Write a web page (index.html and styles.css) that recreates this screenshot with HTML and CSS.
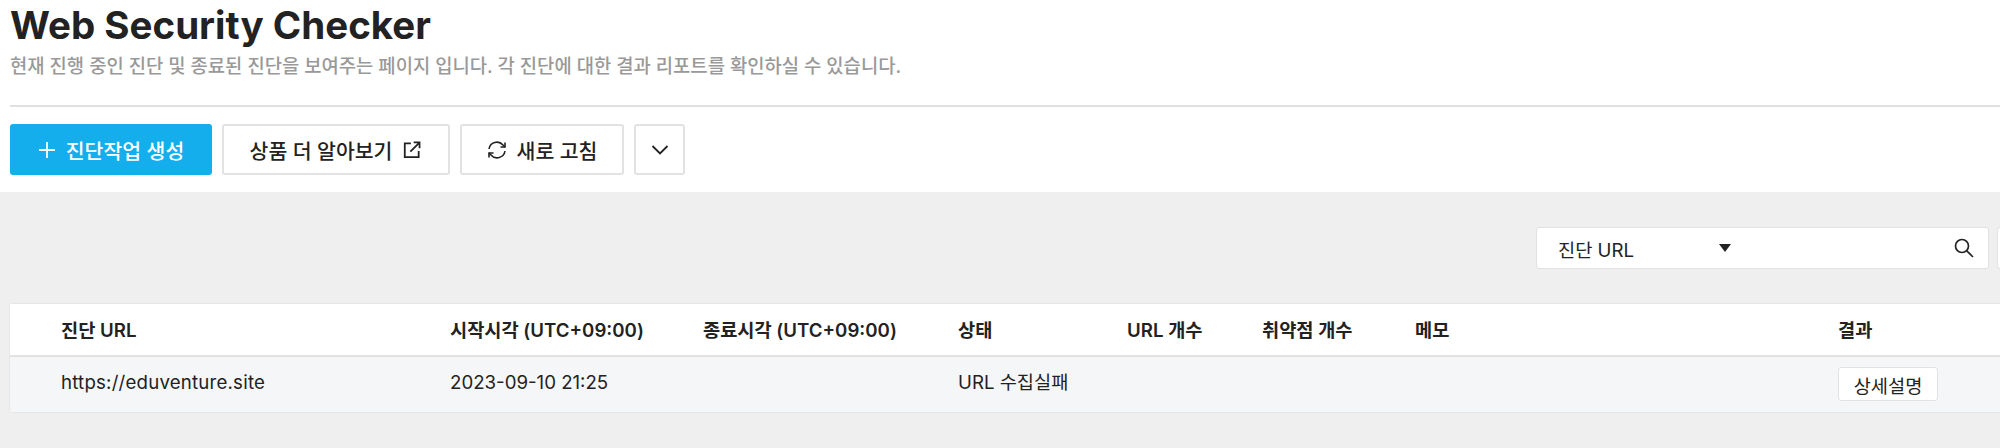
FILE: index.html

```html
<!DOCTYPE HTML>
<html>
<head>
	<title>Web Security Checker</title>
	<link rel="stylesheet" href="styles.css">
</head>
<body>

<div class="ust">
	<h1>Web Security Checker</h1>
	<p class="aciklama">현재 진행 중인 진단 및 종료된 진단을 보여주는 페이지 입니다. 각 진단에 대한 결과 리포트를 확인하실 수 있습니다.</p>
	<div class="cizgi"></div>
	<div class="butonlar">
		<button class="buton mavi">
			<svg width="18" height="18" viewBox="0 0 18 18"><path d="M9 1v16M1 9h16" stroke="#fff" stroke-width="1.8" fill="none"/></svg>
			진단작업 생성
		</button>
		<button class="buton urun">
			상품 더 알아보기
			<svg width="20" height="20" viewBox="0 0 18 18" fill="none" stroke="#222" stroke-width="1.6"><path d="M8 3H2.500v12.500H15V10"/><path d="M7.500 10.500 15.500 2.500M10.500 2.200h5.300v5.300"/></svg>
		</button>
		<button class="buton yenile">
			<svg width="20" height="20" viewBox="0 0 20 20" fill="none" stroke="#222" stroke-width="1.6"><path d="M2 9a8 8 0 0 1 14-4l2 2"/><path d="M18 2.500V7h-4.500"/><path d="M18 11a8 8 0 0 1-14 4l-2-2"/><path d="M2 17.500V13h4.500"/></svg>
			새로 고침
		</button>
		<button class="buton ok">
			<svg width="18" height="10" viewBox="0 0 18 10" fill="none" stroke="#222" stroke-width="1.8"><path d="M1.500 1 9 8.500 16.500 1"/></svg>
		</button>
	</div>
</div>

<div class="alt">
	<div class="arama-satir">
		<div class="arama">
			<div class="secim">
				<span>진단 URL</span>
				<svg width="12" height="8" viewBox="0 0 12 8"><path d="M0 0h12L6 8z" fill="#222"/></svg>
			</div>
			<div class="girdi">
				<svg width="20" height="20" viewBox="0 0 20 20" fill="none" stroke="#222" stroke-width="1.7"><circle cx="8" cy="8" r="6.500"/><path d="M12.800 12.800 19 19"/></svg>
			</div>
		</div>
		<div class="sonraki"></div>
	</div>

	<div class="tablo">
		<div class="satir baslik">
			<div>진단 URL</div>
			<div>시작시각 (UTC+09:00)</div>
			<div>종료시각 (UTC+09:00)</div>
			<div>상태</div>
			<div>URL 개수</div>
			<div>취약점 개수</div>
			<div>메모</div>
			<div>결과</div>
		</div>
		<div class="satir veri">
			<div class="adres">https://eduventure.site</div>
			<div>2023-09-10 21:25</div>
			<div></div>
			<div>URL 수집실패</div>
			<div></div>
			<div></div>
			<div></div>
			<div><button class="detay">상세설명</button></div>
		</div>
	</div>
</div>

</body>
</html>
```

FILE: styles.css

```css
html, body {
	margin: 0;
	height: 100%;
	overflow: hidden;
}

body {
	font-family: "Inter", "Noto Sans CJK KR", sans-serif;
	color: #222;
	background-color: #fff;
	width: 2000px;
	height: 448px;
	display: flex;
	flex-direction: column;
}

.ust {
	height: 192px;
	padding: 0 0 0 10px;
	box-sizing: border-box;
}

h1 {
	margin: 0;
	padding-top: 3px;
	font-size: 38.5px;
	line-height: 45px;
	font-weight: 700;
}

.aciklama {
	margin: 0;
	padding-top: 6px;
	font-size: 18.8px;
	line-height: 26px;
	font-weight: 500;
	color: #999;
}

.cizgi {
	height: 2px;
	margin-top: 25px;
	background-color: #e0e0e0;
}

.butonlar {
	display: flex;
	gap: 10px;
	margin-top: 17px;
}

.buton {
	height: 51px;
	display: flex;
	align-items: center;
	justify-content: center;
	gap: 10px;
	padding: 0;
	font-family: inherit;
	font-size: 20.5px;
	font-weight: 500;
	color: #222;
	background-color: #fff;
	border: 2px solid #e2e2e2;
	border-radius: 3px;
	box-sizing: border-box;
}

.mavi {
	width: 202px;
	color: #fff;
	background-color: #14aeed;
	border-color: #14aeed;
}

.urun {
	width: 228px;
}

.yenile {
	width: 164px;
}

.ok {
	width: 51px;
}

.alt {
	flex: 1;
	background-color: #efefef;
	padding-left: 10px;
}

.arama-satir {
	display: flex;
	justify-content: flex-end;
	gap: 8px;
	padding-top: 35px;
	margin-right: -8px;
}

.arama {
	width: 453px;
	height: 42px;
	display: flex;
	background-color: #fff;
	border: 1px solid #e2e2e2;
	border-radius: 3px;
	box-sizing: border-box;
}

.secim {
	width: 217px;
	display: flex;
	align-items: center;
	justify-content: space-between;
	padding: 0 23px 0 21px;
	box-sizing: border-box;
	font-size: 18.67px;
}

.girdi {
	flex: 1;
	display: flex;
	align-items: center;
	justify-content: flex-end;
	padding-right: 14px;
}

.sonraki {
	width: 11px;
	height: 42px;
	background-color: #fff;
	border: 1px solid #e2e2e2;
	border-radius: 3px;
	box-sizing: border-box;
}

.tablo {
	margin-top: 34px;
	width: 2020px;
	border: 1px solid #e6e6e6;
	border-radius: 3px;
	box-sizing: border-box;
	margin-left: -1px;
}

.satir {
	display: grid;
	grid-template-columns: 389px 253px 255px 169px 135px 153px 423px 1fr;
	padding-left: 51px;
	font-size: 18.67px;
}

.baslik {
	height: 53px;
	align-items: center;
	font-weight: 600;
	padding-bottom: 2px;
	box-sizing: border-box;
	background-color: #fff;
	border-bottom: 2px solid #e2e2e2;
}

.veri {
	height: 55px;
	box-sizing: border-box;
	padding-top: 10px;
	line-height: 32px;
	align-items: start;
	background-color: #f5f6f8;
}

.adres {
	letter-spacing: 0.2px;
}

.detay {
	display: block;
	width: 100px;
	height: 34px;
	padding: 0;
	font-family: inherit;
	font-size: 18.67px;
	color: #222;
	background-color: #fff;
	border: 1px solid #e2e2e2;
	border-radius: 3px;
}
```
